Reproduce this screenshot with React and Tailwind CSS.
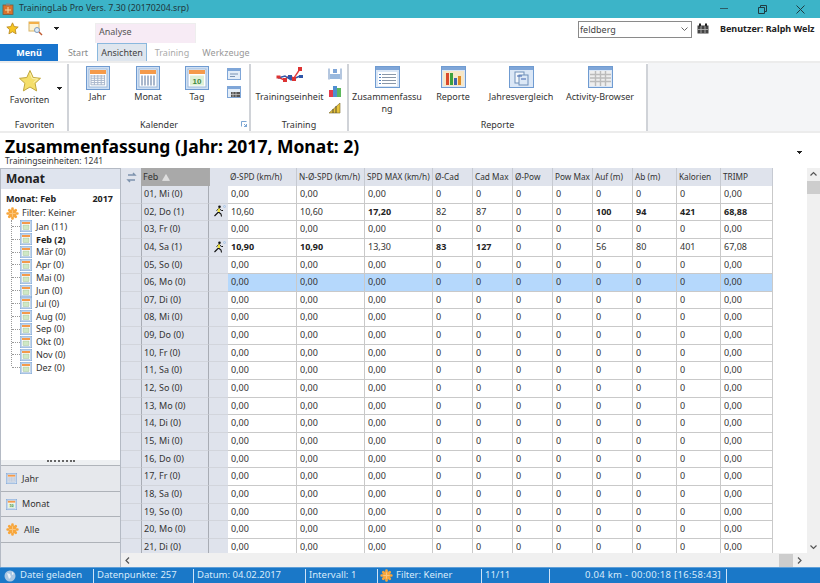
import React from "react";

const Cal = ({ s = 12, kind = "tag" }) => (
  <svg width={s} height={s} viewBox="0 0 24 24" className="shrink-0">
    <rect x="0.5" y="0.5" width="23" height="23" fill="#cfe0f4" stroke="#6f9bd1" />
    <rect x="3" y="3" width="18" height="18" fill="#fff" stroke="#9db8d8" />
    <rect x="4" y="4" width="16" height="4" fill="#f59a4a" />
    {kind === "jahr" && [0, 1, 2, 3, 4].map((i) => <path key={i} d={`M${5 + i * 3.4} 9v10M5 ${10 + i * 2.2}h14`} stroke="#a9b7cc" strokeWidth="1" />)}
    {kind === "monat" && [0, 1, 2, 3, 4].map((i) => <rect key={i} x={5 + i * 3} y="9.5" width="2" height="10" fill="#a9b7cc" />)}
    {kind === "tag" && <rect x="6" y="10" width="12" height="9" fill="#cfe8c6" stroke="#8db07f" strokeWidth="0.7" />}
    {kind === "tag10" && (
      <g>
        <rect x="5" y="9.5" width="14" height="10" fill="#dff0d6" />
        <text x="12" y="18" fontSize="8" textAnchor="middle" fill="#3e8a3e" fontWeight="700" fontFamily="Liberation Sans, sans-serif">10</text>
      </g>
    )}
  </svg>
);

const Star = ({ s = 24 }) => (
  <svg width={s} height={s} viewBox="0 0 24 24" className="shrink-0">
    <path d="M12 1.5l3.2 7 7.3.8-5.4 5 1.5 7.6L12 18l-6.6 3.9 1.5-7.6-5.4-5 7.3-.8z" fill="#f5df6b" stroke="#c0a63c" strokeWidth="1" />
    <path d="M12 4l2.3 5.5 5.3.6-4 3.4" fill="none" stroke="#fbf2b5" strokeWidth="1" />
  </svg>
);

const Puzzle = ({ s = 12 }) => (
  <svg width={s} height={s} viewBox="0 0 24 24" className="shrink-0">
    <path d="M12 3v18M3 12h18M6 6l12 12M18 6L6 18" stroke="#f7a63c" strokeWidth="5" strokeLinecap="round" />
    <path d="M12 6v12M6 12h12" stroke="#fbc57a" strokeWidth="2" />
  </svg>
);

const Runner = () => (
  <svg width="13" height="13" viewBox="0 0 13 13" className="shrink-0">
    <circle cx="6.5" cy="1.7" r="1.3" fill="#111" />
    <path d="M6 3.5L3.5 5.5M6 3.5l2.5 2h1.5" stroke="#111" strokeWidth="1" fill="none" />
    <path d="M5.5 7L3.5 9 1.5 11M5.5 7l2.5 2 .5 2.5" stroke="#111" strokeWidth="1.1" fill="none" />
    <rect x="4.8" y="3.6" width="2.2" height="3.4" fill="#f0e23a" />
    <circle cx="11.5" cy="1.5" r="1" fill="#cfe0f4" stroke="#8fb0d8" strokeWidth="0.5" />
  </svg>
);

const Win = ({ children, w = 25, h = 22 }) => (
  <svg width={w} height={h} viewBox="0 0 25 22" className="shrink-0">
    <rect x="0.5" y="0.5" width="24" height="21" fill="#dbe7f6" stroke="#6f9bd1" />
    <rect x="1" y="1" width="23" height="3" fill="#7fa6d8" />
    {children}
  </svg>
);

const Arrow = ({ cls = "" }) => (
  <svg width="7" height="5" viewBox="0 0 7 5" className={cls}>
    <path d="M1 0h5v1h-1v1h-1v1h-1v-1h-1v-1h-1z" fill="#222" />
  </svg>
);

const Big = ({ w, icon, label }) => (
  <div className={`flex flex-col items-center shrink-0 ${w}`}>
    <div className="h-[25px] flex items-start justify-center">{icon}</div>
    <div className="text-center leading-[12px] text-[#333] whitespace-nowrap">{label}</div>
  </div>
);

const Group = ({ w, label, children, launcher }) => (
  <div className={`${w} shrink-0 flex flex-col border-r-2 border-[#d0d3d8] h-[69px] mt-[1px]`}>
    <div className="flex flex-1 pt-[2px] min-h-0">{children}</div>
    <div className="h-[15px] leading-[13px] text-center text-[#333] relative">
      {label}
      {launcher && (
        <svg width="6" height="6" viewBox="0 0 6 6" className="absolute right-[2px] top-[3px]">
          <path d="M0.5 5.5v-5h5M3 3l2.5 2.5M5.5 3v2.5H3" fill="none" stroke="#5a8fc8" strokeWidth="0.8" />
        </svg>
      )}
    </div>
  </div>
);

const Small = ({ children }) => (
  <svg width="14" height="12" viewBox="0 0 14 12" className="shrink-0">{children}</svg>
);

const Z = "0,00";
const zero = [Z, Z, Z, "0", "0", "0", "0", "0", "0", "0", "0", Z];
const rows = [
  "01, Mi (0)", "02, Do (1)", "03, Fr (0)", "04, Sa (1)", "05, So (0)", "06, Mo (0)", "07, Di (0)",
  "08, Mi (0)", "09, Do (0)", "10, Fr (0)", "11, Sa (0)", "12, So (0)", "13, Mo (0)", "14, Di (0)",
  "15, Mi (0)", "16, Do (0)", "17, Fr (0)", "18, Sa (0)", "19, So (0)", "20, Mo (0)", "21, Di (0)",
];
const special = {
  1: [["10,60"], ["10,60"], ["17,20", 1], ["82"], ["87"], ["0"], ["0"], ["100", 1], ["94", 1], ["421", 1], ["68,88", 1]],
  3: [["10,90", 1], ["10,90", 1], ["13,30"], ["83", 1], ["127", 1], ["0"], ["0"], ["56"], ["80"], ["401"], ["67,08"]],
};
const cols = [
  ["Ø-SPD (km/h)", "w-[69px]"], ["N-Ø-SPD (km/h)", "w-[68px]"], ["SPD MAX (km/h)", "w-[68px]"], ["Ø-Cad", "w-[40px]"],
  ["Cad Max", "w-[40px]"], ["Ø-Pow", "w-[40px]"], ["Pow Max", "w-[40px]"], ["Auf (m)", "w-[40px]"], ["Ab (m)", "w-[44px]"],
  ["Kalorien", "w-[44px]"], ["TRIMP", "w-[52px]"],
];
const months = ["Jan (11)", "Feb (2)", "Mär (0)", "Apr (0)", "Mai (0)", "Jun (0)", "Jul (0)", "Aug (0)", "Sep (0)", "Okt (0)", "Nov (0)", "Dez (0)"];

const Sep = () => <div className="w-[1px] h-[14px] border-r border-[#cfe3f7] shrink-0" />;

export default function App() {
  return (
    <div className="w-[820px] h-[583px] overflow-hidden flex flex-col bg-white text-[9px] text-[#333] font-['Noto_Sans',sans-serif]">
      {/* title bar */}
      <div className="h-[18px] shrink-0 bg-[#3cb4c8] flex items-center">
        <svg width="12" height="12" viewBox="0 0 12 12" className="ml-[2px] mr-[5px]">
          <rect x="1" y="2" width="10" height="9.5" fill="#d9722c" stroke="#7a5a3a" strokeWidth="0.8" />
          <rect x="4" y="0.5" width="4" height="2" fill="#888" />
          <path d="M6 4v6M3 7h6" stroke="#f9d9a0" strokeWidth="1" />
        </svg>
        <span className="text-[8.75px] text-[#20383c] whitespace-nowrap">TrainingLab Pro Vers. 7.30 (20170204.srp)</span>
        <div className="flex-1" />
        <svg width="9" height="2" className="mr-[29px]"><rect width="8" height="1" fill="#2d5c66" /></svg>
        <svg width="9" height="9" viewBox="0 0 9 9" className="mr-[29px]"><path d="M2.5 2V.5h6v6H7M.5 2.5h6v6h-6z" fill="none" stroke="#1f3c42" /></svg>
        <svg width="9" height="9" viewBox="0 0 9 9" className="mr-[15px]"><path d="M.5.5l8 8M8.5.5l-8 8" stroke="#1f3c42" /></svg>
      </div>

      {/* quick row + context tab */}
      <div className="h-[25px] shrink-0 flex">
        <div className="w-[95px] flex items-start pt-[3px] shrink-0">
          <span className="ml-[6px] mt-[1px]">
            <svg width="13" height="13" viewBox="0 0 24 24"><path d="M12 1.5l3.2 7 7.3.8-5.4 5 1.5 7.6L12 18l-6.6 3.9 1.5-7.6-5.4-5 7.3-.8z" fill="#f6c624" stroke="#b8861d" strokeWidth="1.5" /></svg>
          </span>
          <svg width="15" height="15" viewBox="0 0 15 15" className="ml-[9px]">
            <rect x="1" y="1" width="10" height="9" fill="#fdf3d2" stroke="#d8b466" />
            <rect x="1" y="1" width="10" height="2" fill="#f2b04a" />
            <circle cx="9" cy="9" r="2.5" fill="#e0ecf8" stroke="#7b9cc0" />
            <path d="M11 11l3 3" stroke="#c05a30" strokeWidth="1.4" />
          </svg>
          <Arrow cls="ml-[10px] mt-[6px]" />
        </div>
        <div className="w-[101px] h-[20px] mt-[5px] pl-[3px] shrink-0 bg-[#f7ebf5] border-t border-x border-[#eee] text-[#555] leading-[15px]">Analyse</div>
        <div className="flex-1" />
        <div className="flex items-start pt-[3px] pr-[5px]">
          <div className="w-[114px] h-[17px] bg-white border border-[#8a8a8a] flex items-center justify-between pl-[1px] pr-[3px] text-[#444]">
            feldberg
            <svg width="7" height="5" viewBox="0 0 7 5"><path d="M.5.5l3 3 3-3" fill="none" stroke="#666" /></svg>
          </div>
          <svg width="12" height="11" viewBox="0 0 12 11" className="ml-[5px] mr-[11px] mt-[2px] shrink-0">
            <rect x="0.5" y="2.5" width="11" height="8" fill="#444" />
            <rect x="2" y="0.5" width="2" height="3" fill="#222" /><rect x="8" y="0.5" width="2" height="3" fill="#222" />
            <path d="M4 3v7M8 3v7M1 6.5h10" stroke="#bbb" strokeWidth="0.8" />
          </svg>
          <span className="w-[95px] font-bold text-[#222] leading-[16px] whitespace-nowrap text-[9px]">Benutzer: Ralph Welz</span>
        </div>
      </div>

      {/* tabs */}
      <div className="h-[18px] shrink-0 flex items-end">
        <div className="w-[58px] h-[17px] bg-[#1874cd] text-white font-bold flex items-center justify-center">Menü</div>
        <div className="w-[39px] h-[17px] text-[#888] flex items-center justify-center pl-[1px]">Start</div>
        <div className="w-[50px] h-[18px] bg-[#dfe6ee] border-x border-t border-[#8ab8de] text-[#444] flex items-center justify-center">Ansichten</div>
        <div className="w-[50px] h-[17px] text-[#aaa] flex items-center justify-center">Training</div>
        <div className="w-[58px] h-[17px] text-[#999] flex items-center justify-center">Werkzeuge</div>
      </div>

      {/* ribbon */}
      <div className="h-[72px] shrink-0 flex border-y-2 border-[#ececec] overflow-hidden">
        <Group w="w-[69px] pl-[2px]" label="Favoriten">
          <div className="w-[53px] flex flex-col items-center pt-[3px] pl-[2px]">
            <Star s={24} />
            <span className="leading-[14px]">Favoriten</span>
          </div>
          <Arrow cls="mt-[21px] ml-[1px]" />
        </Group>
        <Group w="w-[182px]" label="Kalender" launcher>
          <div className="w-[1px] shrink-0" />
          <Big w="w-[54px] pl-[1px]" icon={<Cal s={24} kind="jahr" />} label="Jahr" />
          <Big w="w-[48px]" icon={<Cal s={24} kind="monat" />} label="Monat" />
          <Big w="w-[50px]" icon={<Cal s={24} kind="tag10" />} label="Tag" />
          <div className="flex flex-col gap-[6px] pl-[5px] pt-[2px]">
            <Small><rect x=".5" y=".5" width="13" height="11" fill="#e3edf8" stroke="#7fa6d8" /><rect x="1" y="1" width="12" height="2" fill="#7fa6d8" /><path d="M3 6h8M3 8.500h5" stroke="#7b93b3" /></Small>
            <Small><rect x=".5" y=".5" width="13" height="11" fill="#e3edf8" stroke="#7fa6d8" /><rect x="1" y="1" width="12" height="2" fill="#7fa6d8" /><rect x="4" y="6" width="9" height="5" fill="#555" /><path d="M6 6v5M9 6v5M4 8.500h9" stroke="#ccc" strokeWidth=".7" /></Small>
          </div>
        </Group>
        <Group w="w-[98px]" label="Training">
          <div className="w-[73px] pl-[4px] flex flex-col items-center shrink-0">
            <div className="h-[25px] flex items-start">
              <svg width="28" height="19" viewBox="0 0 28 19">
                <path d="M2 11l6 3 5-4 5 2 6-9" fill="none" stroke="#e23b3b" strokeWidth="1.4" />
                <path d="M2 12l7-2 6 4 9-4" fill="none" stroke="#2f55a8" strokeWidth="1.4" />
                <rect x="0.500" y="9.500" width="4" height="3" fill="#d33" /><rect x="7" y="12" width="4" height="4" fill="#d33" /><rect x="12" y="9" width="4" height="4" fill="#2f55a8" /><rect x="16" y="11" width="4" height="4" fill="#d33" /><rect x="22" y="1" width="4" height="4" fill="#d33" /><rect x="23" y="9" width="4" height="3" fill="#2f55a8" />
              </svg>
            </div>
            <span className="leading-[12px] whitespace-nowrap">Trainingseinheit</span>
          </div>
          <div className="flex flex-col gap-[5px] pl-[4px] pt-[2px]">
            <Small><path d="M1 .5v11M13 .5v11" stroke="#6a8fc0" /><rect x="2" y="6" width="10" height="5" fill="#9ab9de" /><rect x="5" y="1" width="4" height="4" fill="#7fa6d8" /></Small>
            <Small><rect x="1" y="5" width="4" height="7" fill="#e33b4b" /><rect x="5" y="1" width="4" height="11" fill="#4f8fd0" /><rect x="9" y="3" width="4" height="9" fill="#5cb85c" /></Small>
            <Small><path d="M1 11L12 1v10z" fill="#e8c33a" stroke="#7a6a2a" strokeWidth=".6" /><path d="M5 11V7M8 11V4" stroke="#333" strokeWidth=".8" /></Small>
          </div>
        </Group>
        <Group w="w-[299px]" label="Reporte">
          <div className="w-[4px] shrink-0" />
          <Big w="w-[68px]" label={<>Zusammenfassu<br />ng</>} icon={
            <Win><rect x="3" y="6" width="19" height="14" fill="#fff" /><path d="M7 8.500h14M7 11.500h14M7 14.500h14M7 17.500h14" stroke="#8a97a8" /><path d="M4 8.500h2M4 11.500h2M4 14.500h2M4 17.500h2" stroke="#4f7fbf" /></Win>} />
          <Big w="w-[64px]" label="Reporte" icon={
            <Win><rect x="2" y="5" width="21" height="15" fill="#f6e7c8" /><rect x="5" y="7" width="3" height="12" fill="#d9482b" /><rect x="9" y="7" width="3" height="12" fill="#3da13d" /><rect x="13" y="12" width="3" height="7" fill="#3f63ae" /><rect x="17" y="10" width="3" height="9" fill="#e08a22" /></Win>} />
          <Big w="w-[72px]" label="Jahresvergleich" icon={
            <Win><rect x="6" y="6" width="9" height="11" fill="#f3f7fc" stroke="#6f8fb8" /><rect x="10" y="9" width="9" height="10" fill="#dce8f6" stroke="#6f8fb8" /><path d="M8 10h5M12 13h5" stroke="#3f63ae" /></Win>} />
          <Big w="w-[86px]" label="Activity-Browser" icon={
            <Win><rect x="2" y="5" width="21" height="15" fill="#eee" /><path d="M2 8.500h21M2 12h21M2 15.500h21M7.500 5v15M12.500 5v15M17.500 5v15" stroke="#bbb" strokeWidth="1.400" /></Win>} />
        </Group>
        <div className="flex-1 bg-[#f4f5f7]" />
      </div>

      {/* heading */}
      <div className="h-[35px] shrink-0 flex pl-[5px] pr-[17px]">
        <div className="flex-1 min-w-0 pt-[3px]">
          <div className="text-[17.5px] leading-[20px] font-bold text-black whitespace-nowrap">Zusammenfassung (Jahr: 2017, Monat: 2)</div>
          <div className="text-[8.5px] leading-[10px] text-[#333]">Trainingseinheiten: 1241</div>
        </div>
        <Arrow cls="mt-[18px]" />
      </div>

      {/* content */}
      <div className="flex-1 min-h-0 flex">
        {/* left panel */}
        <div className="w-[121px] shrink-0 flex flex-col border-x border-[#b4bac4] border-t bg-white">
          <div className="h-[20px] shrink-0 bg-[#dfe4ee] text-[12px] font-bold text-[#222] pl-[5px] leading-[20px]">Monat</div>
          <div className="h-[271px] shrink-0 px-[5px] pt-[4px]">
            <div className="flex justify-between font-bold text-[#222] leading-[12px] pr-[2px]"><span>Monat: Feb</span><span>2017</span></div>
            <div className="flex items-center gap-[3px] mt-[1px] h-[14px]"><Puzzle s={13} /><span>Filter: Keiner</span></div>
            <div className="ml-[5px] border-l border-dotted border-[#999] h-[146px]">
              {months.map((m, i) => (
                <div key={m} className="h-[12.85px] flex items-center">
                  <div className="w-[8px] border-t border-dotted border-[#999] shrink-0" />
                  <Cal s={12} />
                  <span className={`ml-[4px] whitespace-nowrap ${i === 1 ? "font-bold text-[#222]" : ""}`}>{m}</span>
                </div>
              ))}
            </div>
          </div>
          <div className="h-[6px] shrink-0 bg-[#eef0f2] border-b border-[#b0b4ba] flex justify-center items-start text-[#555]">
            <div className="w-[28px] border-t-2 border-dotted border-[#666]" />
          </div>
          {[["Jahr", <Cal s={11} kind="jahr" />], ["Monat", <Cal s={11} kind="tag10" />], ["Alle", <Puzzle s={13} />]].map(([t, ic]) => (
            <div key={t} className="h-[25.700px] shrink-0 bg-[#e6e8ec] border-b border-[#aeb2b8] flex items-center pl-[5px] gap-[5px]">
              {ic}<span>{t}</span>
            </div>
          ))}
          <div className="flex-1 min-h-0 bg-[#e6e8ec]" />
        </div>

        {/* grid */}
        <div className="flex-1 min-w-0 flex flex-col">
          <div className="flex-1 min-h-0 flex">
            <div className="flex-1 min-w-0 overflow-hidden">
              <div className="flex h-[18px] items-stretch">
                <div className="w-[20px] shrink-0 bg-[#dfe3ec] flex items-center justify-center">
                  <svg width="11" height="11" viewBox="0 0 11 11"><path d="M2 3h7l-2-2M9 8H2l2 2" fill="none" stroke="#7d93ad" strokeWidth="1.400" /></svg>
                </div>
                <div className="w-[68px] shrink-0 bg-[#a9a9a9] flex items-center pl-[2px] gap-[4px] text-[#333]">Feb
                  <svg width="8" height="7" viewBox="0 0 8 7"><path d="M4 .5l3.500 6h-7z" fill="#ddd" stroke="#eee" strokeWidth=".5" /></svg>
                </div>
                <div className="w-[19px] shrink-0 bg-[#dfe3ec] border-l border-[#aaa]" />
                {cols.map(([c, w]) => (
                  <div key={c} className={`${w} shrink-0 bg-[#dfe3ec] border-r border-[#c6cad2] pl-[2px] leading-[17px] whitespace-nowrap overflow-hidden text-[8.25px]`}>{c}</div>
                ))}
              </div>
              {rows.map((r, i) => {
                const vals = special[i];
                const sel = i === 5;
                return (
                  <div key={r} className="flex h-[17.650px] items-stretch">
                    <div className="w-[20px] shrink-0 bg-[#dfe3ec] border-b border-[#d2d5dc]" />
                    <div className="w-[68px] shrink-0 bg-[#dfe3ec] border-x border-b border-x-[#a8acb4] border-b-[#d2d5dc] pl-[2px] leading-[16px] whitespace-nowrap">{r}</div>
                    <div className="w-[19px] shrink-0 bg-[#dfe3ec] border-b border-[#d2d5dc] flex items-center pl-[4px]">{vals && <Runner />}</div>
                    {cols.map(([c, w], j) => {
                      const v = vals ? vals[j] : [zero[j === 10 ? 11 : j]];
                      return (
                        <div key={c} className={`${w} shrink-0 border-r border-b border-[#c9c9c9] pl-[3px] leading-[16px] whitespace-nowrap overflow-hidden ${sel ? "bg-[#b5d8fc]" : "bg-white"} ${v[1] ? "font-bold text-[#222]" : ""}`}>{v[0]}</div>
                      );
                    })}
                  </div>
                );
              })}
            </div>
            <div className="w-[13px] shrink-0 bg-[#f0f0f0] flex flex-col items-center">
              <svg width="13" height="13" viewBox="0 0 13 13" className="shrink-0"><path d="M3.500 7.500l3-3 3 3" fill="none" stroke="#555" strokeWidth="1.200" /></svg>
              <div className="w-[13px] h-[13px] bg-[#cdcdcd]" />
              <div className="flex-1" />
              <svg width="13" height="13" viewBox="0 0 13 13" className="shrink-0"><path d="M3.500 5.500l3 3 3-3" fill="none" stroke="#555" strokeWidth="1.200" /></svg>
            </div>
          </div>
          <div className="h-[14px] shrink-0 bg-[#f0f0f0] flex items-center pr-[14px]">
            <svg width="13" height="13" viewBox="0 0 13 13" className="shrink-0"><path d="M8 3.500l-3 3 3 3" fill="none" stroke="#555" strokeWidth="1.200" /></svg>
            <div className="flex-1" />
            <div className="w-[14px] h-[13px] bg-[#cdcdcd]" />
            <svg width="13" height="13" viewBox="0 0 13 13" className="shrink-0"><path d="M5 3.500l3 3-3 3" fill="none" stroke="#555" strokeWidth="1.200" /></svg>
          </div>
        </div>
      </div>

      {/* status bar */}
      <div className="h-[16px] shrink-0 bg-[#1a78c8] border-t border-[#5f9fd8] flex items-center text-[#d8ebfb] whitespace-nowrap text-[9.5px]">
        <svg width="12" height="12" viewBox="0 0 12 12" className="ml-[4px] mr-[4px] shrink-0"><circle cx="6" cy="6" r="5.500" fill="#a9c6e2" /><path d="M3 3l3 1 1 3-2 2-1-3zM8 1.500l2 2.500-2 1z" fill="#e8f0f8" /></svg>
        <span className="w-[73px] shrink-0">Datei geladen</span>
        <Sep />
        <span className="w-[99px] pl-[3px] shrink-0">Datenpunkte: 257</span>
        <Sep />
        <span className="w-[111px] pl-[3px] shrink-0">Datum: 04.02.2017</span>
        <Sep />
        <span className="w-[71px] pl-[3px] shrink-0">Intervall: 1</span>
        <Sep />
        <span className="w-[103px] pl-[2px] shrink-0 flex items-center gap-[3px]"><Puzzle s={13} />Filter: Keiner</span>
        <Sep />
        <span className="w-[67px] pl-[3px] shrink-0">11/11</span>
        <Sep />
        <span className="w-[176px] text-right pr-[5px] shrink-0 tracking-[0.3px]">0.04 km - 00:00:18 [16:58:43]</span>
        <Sep />
      </div>
    </div>
  );
}
